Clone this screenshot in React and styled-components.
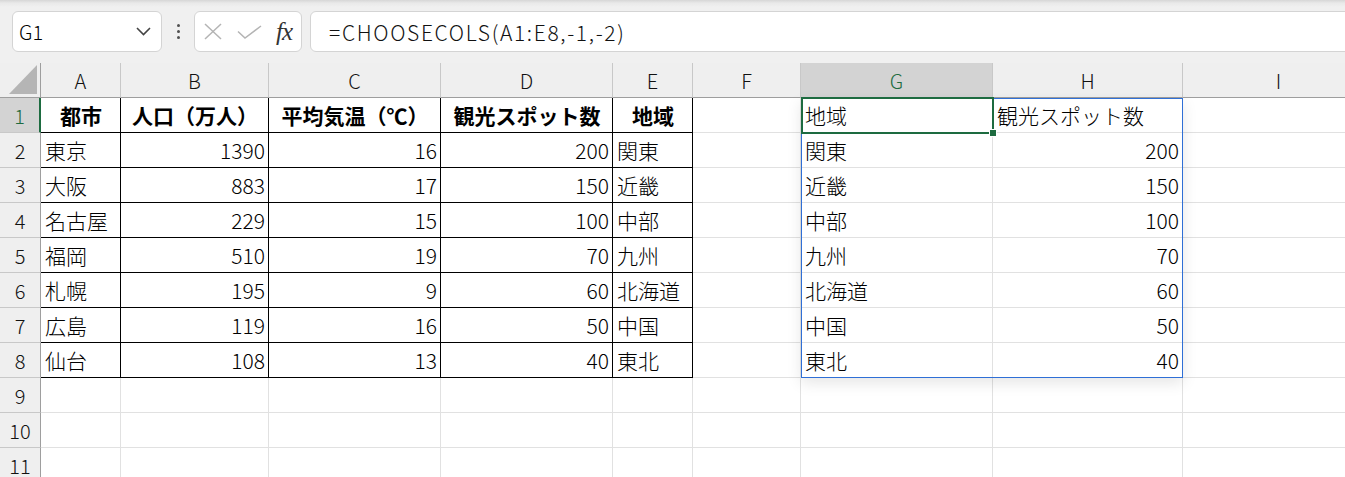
import React from "react";
import styled, { createGlobalStyle } from "styled-components";

const GlobalStyle = createGlobalStyle`
  html, body {
    margin: 0;
    padding: 0;
    background: #fff;
    overflow: hidden;
  }
  * { box-sizing: border-box; }
`;

const FONT = `"Noto Sans CJK JP", "Noto Sans", sans-serif`;

const Page = styled.div`
  width: 1345px;
  height: 477px;
  overflow: hidden;
  font-family: ${FONT};
  color: #000;
`;

const Toolbar = styled.div`
  height: 63px;
  display: flex;
  align-items: flex-start;
  padding: 11px 0 0 12px;
  background: linear-gradient(#d6d6d6 0, #e9e9e9 3px, #f0f0f0 7px, #f0f0f0 100%);
`;

const NameBox = styled.div`
  width: 150px;
  height: 41px;
  background: #fff;
  border: 1px solid #d4d4d4;
  border-radius: 6px;
  display: flex;
  align-items: center;
  justify-content: space-between;
  padding: 0 10px 0 6px;
  font-size: 20px;
  font-weight: 300;
`;

const Dots = styled.div`
  width: 32px;
  height: 41px;
  display: flex;
  flex-direction: column;
  align-items: center;
  justify-content: center;
  gap: 3px;
  span {
    width: 3px;
    height: 3px;
    border-radius: 50%;
    background: #505050;
  }
`;

const FxBox = styled.div`
  width: 108px;
  height: 41px;
  background: #fff;
  border: 1px solid #d4d4d4;
  border-radius: 6px;
  display: flex;
  align-items: center;
  padding: 0 6px 0 8px;
  gap: 14px;
  margin-right: 8px;
`;

const Fx = styled.span`
  font-family: "Liberation Serif", "DejaVu Serif", serif;
  font-style: italic;
  font-size: 25px;
  color: #333;
  letter-spacing: -1px;
`;

const FormulaInput = styled.div`
  flex: 1;
  height: 41px;
  margin-right: -10px;
  background: #fff;
  border: 1px solid #d4d4d4;
  border-radius: 6px;
  display: flex;
  align-items: center;
  padding-left: 18px;
  font-size: 21px;
  font-weight: 300;
  letter-spacing: 1.65px;
  color: #111;
`;

const Sheet = styled.div`
  display: grid;
  grid-template-columns: 41px 80px 148px 172px 172px 80px 108px 192px 190px 192px;
  grid-auto-rows: 35px;
  width: 1375px;
  font-size: 21px;
`;

const Corner = styled.div`
  background: #efefef;
  border-right: 1px solid #9e9e9e;
  border-bottom: 1px solid #9e9e9e;
  display: flex;
  align-items: flex-end;
  justify-content: flex-end;
  padding: 0 3px 3px 0;
  &::after {
    content: "";
    width: 28px;
    height: 29px;
    background: #b5b5b5;
    clip-path: polygon(100% 0, 100% 100%, 0 100%);
  }
`;

const ColHead = styled.div`
  background: ${(p) => (p.$active ? "#d3d3d3" : "#efefef")};
  color: ${(p) => (p.$active ? "#1d6b40" : "#111")};
  border-right: 1px solid #c8c8c8;
  border-bottom: 1px solid #9e9e9e;
  display: flex;
  align-items: center;
  justify-content: center;
  font-size: 20px;
  font-weight: 300;
`;

const RowHead = styled.div`
  background: ${(p) => (p.$active ? "#d3d3d3" : "#efefef")};
  color: ${(p) => (p.$active ? "#1d6b40" : "#111")};
  border-right: ${(p) => (p.$active ? "2px solid #1d6b40" : "1px solid #9e9e9e")};
  border-bottom: 1px solid #c8c8c8;
  display: flex;
  align-items: center;
  justify-content: center;
  font-size: 20px;
  font-weight: 300;
`;

const Cell = styled.div`
  position: relative;
  border-right: 1px solid ${(p) => (p.$table ? "#000" : "#e1e1e1")};
  border-bottom: 1px solid ${(p) => (p.$table ? "#000" : "#e1e1e1")};
  display: flex;
  align-items: center;
  justify-content: ${(p) => p.$align};
  padding: 0 3px 0 4px;
  font-weight: ${(p) => (p.$bold ? 700 : 300)};
  white-space: nowrap;
  overflow: visible;
`;

const SpillOutline = styled.div`
  position: absolute;
  left: 0;
  top: 0;
  width: 382px;
  height: 280px;
  border: 1px solid #2f6fd6;
  box-shadow: 0 5px 14px rgba(0, 0, 0, 0.1);
  pointer-events: none;
  z-index: 1;
`;

const Selection = styled.div`
  position: absolute;
  left: 0;
  top: -1px;
  width: 193px;
  height: 37px;
  border: 2px solid #1d6b40;
  pointer-events: none;
  z-index: 2;
`;

const Handle = styled.div`
  position: absolute;
  right: -5px;
  bottom: -5px;
  width: 8px;
  height: 8px;
  background: #1d6b40;
  border: 1px solid #fff;
`;

const CellText = styled.span`
  position: relative;
  z-index: 3;
`;

const COLS = ["A", "B", "C", "D", "E", "F", "G", "H", "I"];

const TABLE = [
  ["都市", "人口（万人）", "平均気温（℃）", "観光スポット数", "地域"],
  ["東京", 1390, 16, 200, "関東"],
  ["大阪", 883, 17, 150, "近畿"],
  ["名古屋", 229, 15, 100, "中部"],
  ["福岡", 510, 19, 70, "九州"],
  ["札幌", 195, 9, 60, "北海道"],
  ["広島", 119, 16, 50, "中国"],
  ["仙台", 108, 13, 40, "東北"],
];

const ROW_COUNT = 11;

// G列 = 地域(E), H列 = 観光スポット数(D)
const cellFor = (r, c) => {
  if (r > TABLE.length) return null;
  const row = TABLE[r - 1];
  if (c < 5) return row[c];
  if (c === 6) return row[4];
  if (c === 7) return row[3];
  return null;
};

const Chevron = () => (
  <svg width="15" height="9" viewBox="0 0 15 9">
    <polyline points="1,1 7.5,7.5 14,1" fill="none" stroke="#444" strokeWidth="1.6" />
  </svg>
);

const CrossIcon = () => (
  <svg width="20" height="17" viewBox="0 0 20 17">
    <line x1="2" y1="1" x2="18" y2="16" stroke="#b4b4b4" strokeWidth="1.5" />
    <line x1="18" y1="1" x2="2" y2="16" stroke="#b4b4b4" strokeWidth="1.5" />
  </svg>
);

const CheckIcon = () => (
  <svg width="25" height="14" viewBox="0 0 25 14">
    <polyline points="1,6.5 8,13 24,1" fill="none" stroke="#b4b4b4" strokeWidth="1.5" />
  </svg>
);

export default function App() {
  const rows = [];
  for (let r = 1; r <= ROW_COUNT; r++) {
    rows.push(
      <RowHead key={`rh${r}`} $active={r === 1}>
        {r}
      </RowHead>
    );
    COLS.forEach((col, c) => {
      const value = cellFor(r, c);
      const inTable = r <= TABLE.length && c < 5;
      const isNum = typeof value === "number";
      const align = inTable && r === 1 ? "center" : isNum ? "flex-end" : "flex-start";
      rows.push(
        <Cell
          key={`${col}${r}`}
          $table={inTable}
          $bold={inTable && r === 1}
          $align={align}
        >
          {r === 1 && col === "G" && (
            <>
              <SpillOutline />
              <Selection>
                <Handle />
              </Selection>
            </>
          )}
          {value !== null && <CellText>{value}</CellText>}
        </Cell>
      );
    });
  }

  return (
    <Page>
      <GlobalStyle />
      <Toolbar>
        <NameBox>
          <span>G1</span>
          <Chevron />
        </NameBox>
        <Dots>
          <span />
          <span />
          <span />
        </Dots>
        <FxBox>
          <CrossIcon />
          <CheckIcon />
          <Fx>fx</Fx>
        </FxBox>
        <FormulaInput>=CHOOSECOLS(A1:E8,-1,-2)</FormulaInput>
      </Toolbar>
      <Sheet>
        <Corner />
        {COLS.map((col) => (
          <ColHead key={col} $active={col === "G"}>
            {col}
          </ColHead>
        ))}
        {rows}
      </Sheet>
    </Page>
  );
}
